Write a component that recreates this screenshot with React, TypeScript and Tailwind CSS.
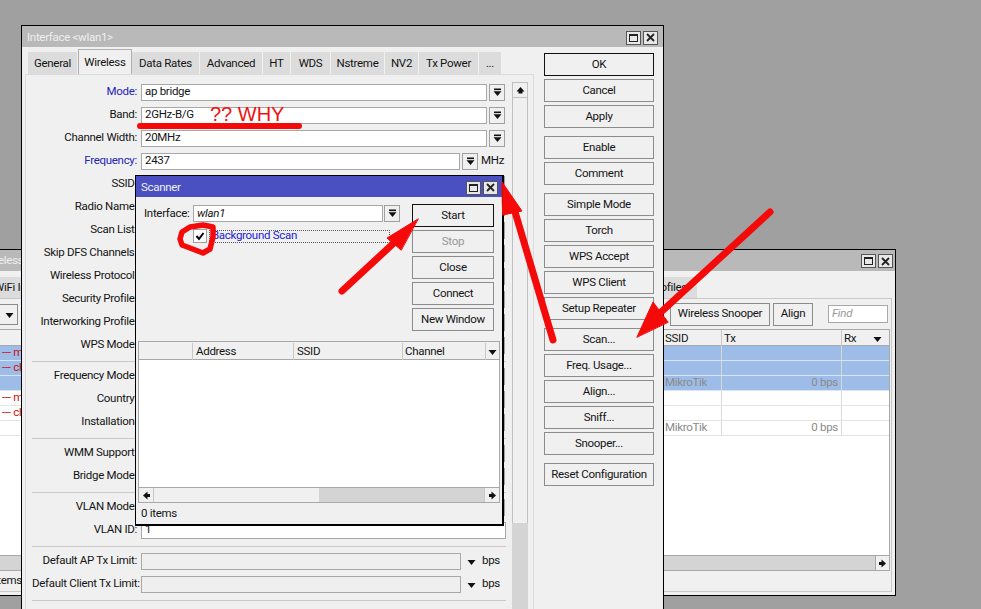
import React from "react";

const Spin = () => (
  <span className="w-[16px] h-[17px] border border-[#a0a0a0] bg-[#f0f0f0] flex items-center justify-center shrink-0">
    <svg width="9" height="9" viewBox="0 0 9 9"><rect x="1" y="0.5" width="7" height="1.6" fill="#111" /><path d="M0.5 3.2h8L4.5 8z" fill="#111" /></svg>
  </span>
);

const WinButtons = () => (
  <div className="flex gap-[2px]">
    <span className="w-[15px] h-[14px] border border-[#555] bg-[#e8e8e8] flex items-center justify-center">
      <span className="w-[9px] h-[8px] border border-[#222] border-t-2 block" />
    </span>
    <span className="w-[15px] h-[14px] border border-[#555] bg-[#e8e8e8] flex items-center justify-center">
      <svg width="9" height="9" viewBox="0 0 9 9"><path d="M1 1l7 7M8 1L1 8" stroke="#222" strokeWidth="1.8" /></svg>
    </span>
  </div>
);

const Btn = ({ children, cls = "", dark = false, dim = false }: { children: React.ReactNode; cls?: string; dark?: boolean; dim?: boolean }) => (
  <div className={`h-[23px] flex items-center justify-center bg-[#f0f0f0] border shrink-0 ${dark ? "border-[#111]" : "border-[#8c8c8c]"} ${dim ? "text-[#999]" : ""} ${cls}`}>{children}</div>
);

const ArrowHead = ({ dir }: { dir: "up" | "down" | "left" | "right" }) => {
  const d = { up: "M4.5 1l4 4.5h-2v2h-4v-2h-2z", down: "M0.5 3h8L4.5 8z", left: "M1 4.5l4.5-4v2.5h2.5v3H5.5v2.5z", right: "M8 4.5l-4.5-4v2.5H1v3h2.5v2.5z" }[dir];
  return <svg width="9" height="9" viewBox="0 0 9 9"><path d={d} fill="#111" /></svg>;
};

const Label = ({ text, blue = false }: { text: string; blue?: boolean }) => (
  <div className={`w-[105px] text-right whitespace-nowrap shrink-0 pb-[2px] ${blue ? "text-[#2323b8]" : ""}`}>{text}</div>
);

const Row = ({ label, value = "", blue = false, unit = "", spin = true }: { label: string; value?: string; blue?: boolean; unit?: string; spin?: boolean }) => (
  <div className="h-[23px] flex items-center">
    <Label text={label} blue={blue} />
    <div className={`ml-[4px] h-[17px] bg-white border border-[#a8a8a8] pl-[3px] pb-[2px] flex items-center ${unit ? "w-[319px]" : spin ? "w-[346px]" : "w-[365px]"}`}>{value}</div>
    {spin && <span className="ml-[2px]"><Spin /></span>}
    {unit && <span className="ml-[3px] pb-[2px]">{unit}</span>}
  </div>
);

const LimitRow = ({ label }: { label: string }) => (
  <div className="h-[23px] flex items-center">
    <Label text={label} />
    <div className="ml-[4px] h-[17px] w-[320px] bg-[#efefef] border border-[#a8a8a8]" />
    <span className="ml-[4px] w-[12px] flex justify-center"><ArrowHead dir="down" /></span>
    <span className="ml-[5px] pb-[2px]">bps</span>
  </div>
);

const Sep = () => (
  <div className="h-[8px] flex items-center"><div className="h-px w-[474px] bg-[#c8c8c8]" /></div>
);

const tabs: [string, string][] = [
  ["General", "w-[50px]"], ["Wireless", "w-[54px]"], ["Data Rates", "w-[68px]"], ["Advanced", "w-[63px]"], ["HT", "w-[28px]"],
  ["WDS", "w-[40px]"], ["Nstreme", "w-[54px]"], ["NV2", "w-[34px]"], ["Tx Power", "w-[60px]"], ["...", "w-[23px]"],
];

const sideBtns = [
  ["OK", "Cancel", "Apply"], ["Enable", "Comment"], ["Simple Mode", "Torch", "WPS Accept", "WPS Client", "Setup Repeater"],
  ["Scan...", "Freq. Usage...", "Align...", "Sniff...", "Snooper..."], ["Reset Configuration"],
];

const backRows = [
  { red: "--- managed by CAPsMAN", blue: true },
  { red: "--- channel: 2437", blue: true },
  { ssid: "MikroTik", tx: "0 bps", blue: true },
  { red: "--- managed by CAPsMAN" },
  { red: "--- channel: 2437" },
  { ssid: "MikroTik", tx: "0 bps" },
];

export default function App() {
  return (
    <div className="relative w-[981px] h-[609px] overflow-hidden bg-[#a0a0a0] text-[#141414] text-[11.5px] tracking-[-0.3px] font-['Roboto',sans-serif]">
      {/* back window */}
      <div className="absolute left-[-20px] top-[249px] w-[916px] h-[347px] border border-black bg-[#f0f0f0] flex flex-col">
        <div className="h-[21px] bg-[#b9b9b9] flex items-center justify-between pl-px pr-[2px] pt-px shrink-0 text-[#efefef]">
          <span>Wireless Tables</span>
          <WinButtons />
        </div>
        <div className="flex flex-col flex-1 px-[3px] pb-[3px]">
          <div className="flex mt-[6px] h-[21px] justify-between shrink-0">
            <div className="bg-[#dcdcdc] px-[10px] flex items-center">WiFi Interfaces</div>
            <div className="bg-[#dcdcdc] px-[10px] flex items-center mr-[195px]">Security Profiles</div>
          </div>
          <div className="flex-1 border border-[#c8c8c8] flex flex-col">
            <div className="h-[30px] flex items-center shrink-0 pr-[3px]">
              <Btn cls="!h-[21px] w-[33px] pl-[16px]"><ArrowHead dir="down" /></Btn>
              <Btn cls="!h-[21px] w-[40px] ml-[3px]">{""}</Btn>
              <Btn cls="w-[100px] ml-auto">Wireless Snooper</Btn>
              <Btn cls="w-[40px] ml-[3px]">Align</Btn>
              <div className="ml-[15px] w-[60px] h-[18px] bg-white border border-[#a8a8a8] pl-[3px] flex items-center italic text-[#999]">Find</div>
            </div>
            <div className="flex-1 mx-px flex flex-col border border-[#a8a8a8] bg-white">
              <div className="h-[16px] grid grid-cols-[676px_59px_120px_24px_1fr] bg-[#f0f0f0] border-b border-[#a8a8a8] shrink-0">
                <span />
                <span className="pl-[2px] border-r border-[#c8c8c8]">SSID</span>
                <span className="pl-[2px] border-r border-[#c8c8c8]">Tx</span>
                <span className="pl-[2px]">Rx</span>
                <span className="flex items-center justify-center"><ArrowHead dir="down" /></span>
              </div>
              <div className="flex-1">
                {backRows.map((r, i) => (
                  <div key={i} className={`h-[15px] leading-[13px] grid grid-cols-[676px_59px_120px_1fr] border-b ${r.blue ? "bg-[#9dbde8] border-[#d8e4f4]" : "bg-white border-[#e4e4e4]"}`}>
                    <span className="pl-[15px] text-[#d01010] whitespace-nowrap">{r.red}</span>
                    <span className="pl-[2px] text-[#8a8a8a] border-r border-[#d8d8d8]">{r.ssid}</span>
                    <span className="pr-[3px] text-right text-[#8a8a8a] border-r border-[#d8d8d8]">{r.tx}</span>
                    <span />
                  </div>
                ))}
              </div>
              <div className="h-[15px] bg-[#d4d4d4] border-t border-[#a8a8a8] flex justify-end shrink-0">
                <span className="w-[14px] bg-[#f0f0f0] border-l border-[#a8a8a8] flex items-center justify-center"><ArrowHead dir="right" /></span>
              </div>
            </div>
            <div className="h-[20px] flex items-center pl-px shrink-0">6 items</div>
          </div>
        </div>
      </div>

      {/* interface window */}
      <div className="absolute left-[21px] top-[25px] w-[643px] h-[620px] border border-black bg-[#f0f0f0] flex flex-col">
        <div className="h-[21px] bg-[#b9b9b9] flex items-center justify-between px-[5px] pt-[2px] shrink-0 text-[#efefef]">
          <span>Interface &lt;wlan1&gt;</span>
          <WinButtons />
        </div>
        <div className="flex flex-1 pl-[3px]">
          <div className="w-[509px] flex flex-col">
            <div className="h-[27px] flex items-end pl-[3px] shrink-0">
              {tabs.map(([t, w]) => (
                <div key={t} className={`${w} flex items-center justify-center ${t === "Wireless" ? "h-[25px] bg-[#f0f0f0] border border-b-0 border-[#b0b0b0] pt-px" : "h-[22px] bg-[#dcdcdc] border-r border-[#f0f0f0] pt-px"}`}>{t}</div>
              ))}
            </div>
            <div className="flex-1 border border-b-0 border-[#dcdcdc] flex pt-[6px] pl-[6px]">
              <div className="w-[474px] flex flex-col">
                <Row label="Mode:" value="ap bridge" blue />
                <Row label="Band:" value="2GHz-B/G" />
                <Row label="Channel Width:" value="20MHz" />
                <Row label="Frequency:" value="2437" blue unit="MHz" />
                <Row label="SSID:" />
                <Row label="Radio Name:" />
                <Row label="Scan List:" />
                <Row label="Skip DFS Channels:" />
                <Row label="Wireless Protocol:" />
                <Row label="Security Profile:" />
                <Row label="Interworking Profile:" />
                <Row label="WPS Mode:" />
                <Sep />
                <Row label="Frequency Mode:" />
                <Row label="Country:" />
                <Row label="Installation:" />
                <Sep />
                <Row label="WMM Support:" />
                <Row label="Bridge Mode:" />
                <Sep />
                <Row label="VLAN Mode:" />
                <Row label="VLAN ID:" value="1" spin={false} />
                <Sep />
                <LimitRow label="Default AP Tx Limit:" />
                <LimitRow label="Default Client Tx Limit:" />
                <Sep />
                <div className="ml-[109px] mt-[5px] w-[13px] h-[13px] bg-white border border-[#a0a0a0]" />
              </div>
              <div className="ml-[6px] w-[16px] mt-px flex flex-col">
                <div className="h-[16px] border border-[#c0c0c0] flex items-center justify-center"><ArrowHead dir="up" /></div>
                <div className="h-[425px] border-x border-[#c0c0c0]" />
                <div className="flex-1 bg-[#d4d4d4]" />
              </div>
            </div>
          </div>
          <div className="ml-[10px] w-[110px] flex flex-col gap-[8px] pt-[6px]">
            {sideBtns.map((g, i) => (
              <div key={i} className="flex flex-col gap-[3px]">
                {g.map((b) => <Btn key={b} dark={b === "OK"}>{b}</Btn>)}
              </div>
            ))}
          </div>
        </div>
      </div>

      {/* scanner */}
      <div className="absolute left-[135px] top-[175px] w-[369px] h-[351px] border border-black border-r-2 border-b-2 bg-[#f0f0f0] flex flex-col">
        <div className="h-[21px] bg-[#4a50c2] flex items-center justify-between pl-[5px] pr-[4px] pt-[2px] shrink-0 text-[#efefef]">
          <span>Scanner</span>
          <WinButtons />
        </div>
        <div className="flex pt-[6px] pl-[8px] shrink-0 h-[144px]">
          <div className="w-[268px]">
            <div className="flex items-center h-[18px] mt-px">
              <span className="w-[44px] whitespace-nowrap pt-px">Interface:</span>
              <div className="ml-[5px] w-[190px] h-[17px] bg-white border border-[#a8a8a8] pl-[3px] pt-px flex items-center italic">wlan1</div>
              <span className="ml-px"><Spin /></span>
            </div>
            <div className="flex items-center mt-[7px] ml-[49px] h-[14px]">
              <span className="w-[14px] h-[14px] bg-white border border-[#a0a0a0] flex items-center justify-center shrink-0">
                <svg width="10" height="10" viewBox="0 0 10 10"><path d="M1.5 5l2.5 3L8.5 2" stroke="#000" strokeWidth="2" fill="none" /></svg>
              </span>
              <span className="ml-[2px] w-[181px] h-[13px] border border-dotted border-[#555] text-[#2222d0] pl-[2px] flex items-center whitespace-nowrap">Background Scan</span>
            </div>
          </div>
          <div className="w-[82px] flex flex-col gap-[3px] pt-px">
            <Btn dark>Start</Btn>
            <Btn dim>Stop</Btn>
            <Btn>Close</Btn>
            <Btn>Connect</Btn>
            <Btn>New Window</Btn>
          </div>
        </div>
        <div className="mx-[2px] h-[162px] border border-[#a8a8a8] bg-white flex flex-col shrink-0">
          <div className="h-[18px] grid grid-cols-[54px_101px_109px_83px_1fr] bg-[#f0f0f0] border-b border-[#a8a8a8] shrink-0 pt-px">
            <span className="border-r border-[#c8c8c8]" />
            <span className="pl-[3px] border-r border-[#c8c8c8]">Address</span>
            <span className="pl-[3px] border-r border-[#c8c8c8]">SSID</span>
            <span className="pl-[2px] border-r border-[#c8c8c8]">Channel</span>
            <span className="flex items-center justify-center"><ArrowHead dir="down" /></span>
          </div>
          <div className="flex-1" />
          <div className="h-[15px] flex border-t border-[#a8a8a8] shrink-0">
            <span className="w-[15px] bg-[#f0f0f0] border-r border-[#c8c8c8] flex items-center justify-center"><ArrowHead dir="left" /></span>
            <span className="w-[165px] bg-[#f0f0f0]" />
            <span className="flex-1 bg-[#d4d4d4]" />
            <span className="w-[15px] bg-[#f0f0f0] border-l border-[#c8c8c8] flex items-center justify-center"><ArrowHead dir="right" /></span>
          </div>
        </div>
        <div className="flex-1 flex items-center pl-[5px] pt-px">0 items</div>
      </div>

      {/* annotations */}
      <svg className="absolute left-0 top-0 pointer-events-none" width="981" height="609" viewBox="0 0 981 609">
        <g fill="#f50a0a" stroke="#f50a0a" strokeLinecap="round" strokeLinejoin="round">
          <line x1="140" y1="126" x2="299" y2="126" strokeWidth="6" />
          <path d="M213 227L203 225L190 227L182 232L180 239L182 245L190 248L203 253L210 249L213 237Z" fill="none" strokeWidth="5.5" />
          <line x1="342" y1="291" x2="396" y2="241" strokeWidth="7" />
          <polygon points="418,219 387,238 401,250" strokeWidth="1" />
          <line x1="553" y1="340" x2="513" y2="205" strokeWidth="7" />
          <polygon points="502,182 522,211 503,215" strokeWidth="1" />
          <line x1="770" y1="212" x2="660" y2="313" strokeWidth="7" />
          <polygon points="637,337 653,302 668,322" strokeWidth="1" />
        </g>
      </svg>
      <div className="absolute left-[210px] top-[102px] text-[20px] tracking-normal leading-[24px] text-[#f01010] font-['Liberation_Sans',sans-serif]">?? WHY</div>
    </div>
  );
}
